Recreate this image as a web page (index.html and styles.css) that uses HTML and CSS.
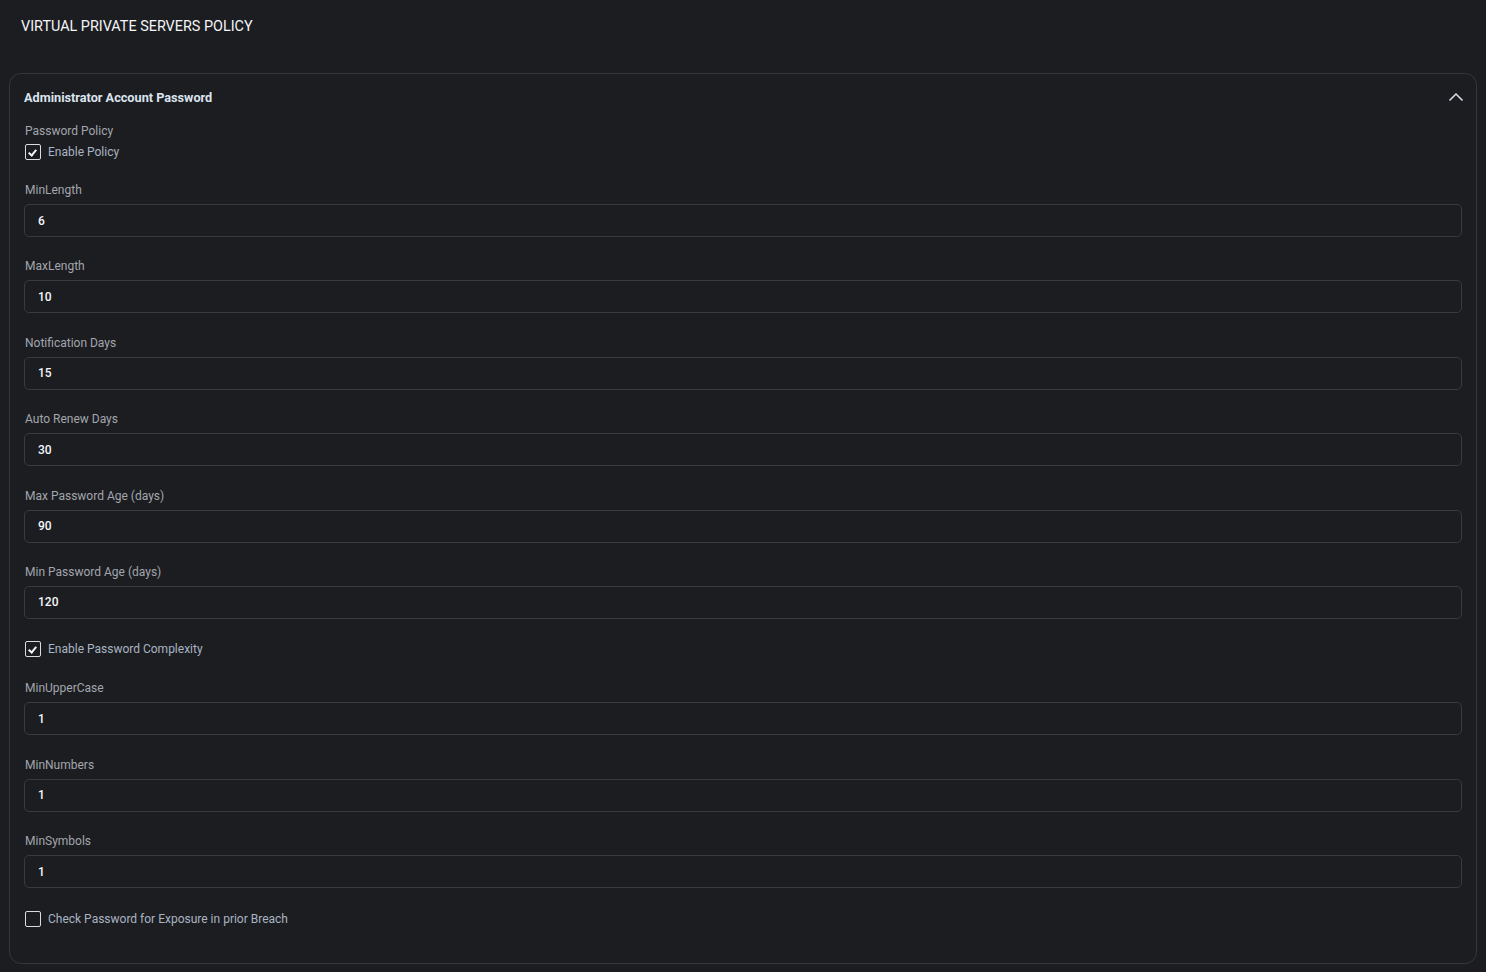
FILE: index.html
```html
<!DOCTYPE html>
<html lang="en">
	<head>
		<meta charset="utf-8" />
		<title>Virtual Private Servers Policy</title>
		<link rel="stylesheet" href="styles.css">
	</head>
	<body>
		<div class="page">
			<h1 class="page-title">VIRTUAL PRIVATE SERVERS POLICY</h1>

			<div class="panel">
				<div class="panel-head">
					<span class="panel-title">Administrator Account Password</span>
					<svg class="chevron" width="16" height="10" viewBox="0 0 16 10">
						<polyline points="1.5,8.5 8,2 14.5,8.5" fill="none" stroke="#d6e2ef" stroke-width="1.5" />
					</svg>
				</div>

				<div class="group-label">Password Policy</div>
				<label class="check check-first">
					<span class="box on"></span>
					<span>Enable Policy</span>
				</label>

				<div class="field">
					<div class="label">MinLength</div>
					<div class="input">6</div>
				</div>
				<div class="field">
					<div class="label">MaxLength</div>
					<div class="input">10</div>
				</div>
				<div class="field">
					<div class="label">Notification Days</div>
					<div class="input">15</div>
				</div>
				<div class="field">
					<div class="label">Auto Renew Days</div>
					<div class="input">30</div>
				</div>
				<div class="field">
					<div class="label">Max Password Age (days)</div>
					<div class="input">90</div>
				</div>
				<div class="field">
					<div class="label">Min Password Age (days)</div>
					<div class="input">120</div>
				</div>

				<label class="check">
					<span class="box on"></span>
					<span>Enable Password Complexity</span>
				</label>

				<div class="field">
					<div class="label">MinUpperCase</div>
					<div class="input">1</div>
				</div>
				<div class="field">
					<div class="label">MinNumbers</div>
					<div class="input">1</div>
				</div>
				<div class="field">
					<div class="label">MinSymbols</div>
					<div class="input">1</div>
				</div>

				<label class="check">
					<span class="box"></span>
					<span>Check Password for Exposure in prior Breach</span>
				</label>
			</div>
		</div>
	</body>
</html>
```

FILE: styles.css
```css
*{
	padding: 0;
	margin: 0;
	box-sizing: border-box;
}
html, body {
	background: #1c1d21;
}
body {
	font-family: Roboto, "Liberation Sans", sans-serif;
	color: #a2a6ad;
	height: 972px;
	overflow: hidden;
}
.page {
	padding: 18px 9px 0 9px;
}
.page-title {
	font-size: 14.4px;
	font-weight: 400;
	line-height: 18px;
	color: #f3f5f8;
	padding-left: 12px;
}
.panel {
	margin-top: 37px;
	border: 1px solid #36373c;
	border-radius: 12px;
	padding: 15px 14px 37px 14px;
	height: 891px;
	display: flex;
	flex-direction: column;
}
.panel-head {
	display: flex;
	justify-content: space-between;
	align-items: center;
	height: 16px;
	flex: none;
}
.panel-title {
	font-size: 12.7px;
	font-weight: 700;
	color: #dbe4ee;
}
.chevron {
	margin-right: -2px;
}
.group-label {
	margin-top: 18px;
	font-size: 12px;
	line-height: 16px;
	padding-left: 1px;
}
.check {
	display: flex;
	align-items: center;
	gap: 7px;
	height: 16px;
	flex: none;
	padding-left: 1px;
	font-size: 12px;
	color: #a9b4c2;
	margin-top: 2px;
	margin-bottom: 22px;
}
.check-first {
	margin-top: 5px;
	margin-bottom: 21px;
}
.box {
	width: 16px;
	height: 16px;
	border: 1.5px solid #d9dce1;
	border-radius: 2px;
	position: relative;
	flex: none;
}
.box.on::after {
	content: "";
	position: absolute;
	left: 4px;
	top: 2.5px;
	width: 3px;
	height: 6px;
	border-right: 2px solid #f2f4f7;
	border-bottom: 2px solid #f2f4f7;
	transform: rotate(40deg);
}
.field {
	margin-bottom: 20.4px;
	flex: none;
}
.label {
	font-size: 12px;
	line-height: 16px;
	padding-left: 1px;
	margin-top: 1px;
	margin-bottom: 6px;
}
.input {
	height: 33px;
	border: 1px solid #393a40;
	border-radius: 5px;
	padding: 0 13px;
	display: flex;
	align-items: center;
	font-size: 12px;
	font-weight: 500;
	color: #f4f6f9;
}
```
